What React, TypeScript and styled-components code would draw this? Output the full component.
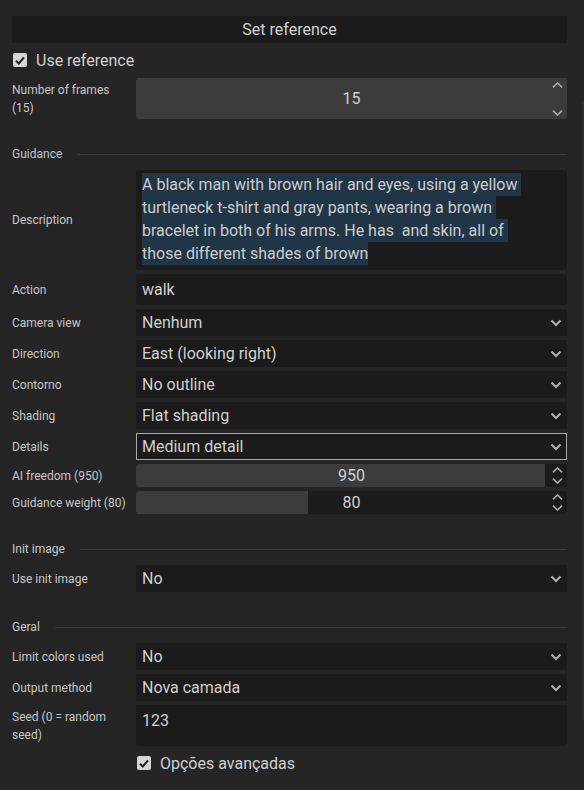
import React from "react";
import styled, { createGlobalStyle } from "styled-components";

const Global = createGlobalStyle`
  html, body { margin: 0; padding: 0; background: #252525; }
  body { font-family: Roboto, "Noto Sans", "Liberation Sans", sans-serif; color: #cfcfcf; }
  * { box-sizing: border-box; }
`;

const Page = styled.div`
  position: relative;
  width: 584px;
  height: 790px;
  overflow: hidden;
  background: #252525;
  padding: 16px 17px 0 12px;
  display: flex;
  flex-direction: column;
`;

const ScrollThumb = styled.div`
  position: absolute;
  right: 0;
  top: 101px;
  width: 2px;
  height: 619px;
  background: #2f2f2f;
`;

const TopButton = styled.div`
  height: 27px;
  background: #1b1b1b;
  display: flex;
  align-items: center;
  justify-content: center;
  font-size: 16px;
  color: #d2d2d2;
`;

const CheckRow = styled.div<{ $indent?: number; $mt: number; $mb: number }>`
  display: flex;
  align-items: center;
  gap: 9px;
  height: 20px;
  margin: ${(p) => p.$mt}px 0 ${(p) => p.$mb}px ${(p) => p.$indent ?? 1}px;
  font-size: 16px;
  color: #d0d0d0;
`;

const Box = styled.span`
  width: 14px;
  height: 14px;
  border-radius: 2px;
  background: #d6d6d6;
  display: flex;
  align-items: center;
  justify-content: center;
`;

const Form = styled.div`
  display: flex;
  flex-direction: column;
  gap: 4px;
`;

const Row = styled.div`
  display: grid;
  grid-template-columns: 124px 1fr;
  align-items: center;
`;

const Label = styled.div`
  font-size: 12px;
  line-height: 18px;
  color: #c6c6c6;
`;

const Section = styled.div`
  display: flex;
  align-items: center;
  gap: 15px;
  height: 16px;
  margin: 23px 0 4px;
  font-size: 12px;
  color: #c6c6c6;
  &::after {
    content: "";
    flex: 1;
    height: 1px;
    background: #3b3b3b;
  }
`;

const Field = styled.div<{ $h: number; $bordered?: boolean; $round?: boolean }>`
  position: relative;
  height: ${(p) => p.$h}px;
  background: #1b1b1b;
  border: 1px solid ${(p) => (p.$bordered ? "#a8a8a8" : "transparent")};
  border-radius: ${(p) => (p.$round ? 3 : 0)}px;
  display: flex;
  align-items: center;
  padding: 0 5px;
  font-size: 16px;
  color: #d0d0d0;
`;

const TopField = styled(Field)`
  align-items: flex-start;
  padding-top: 5px;
`;

const FieldText = styled.span`
  flex: 1;
`;

const Chevron = styled.svg`
  width: 12px;
  height: 8px;
  margin-right: -1px;
`;

const TextArea = styled.div`
  height: 100px;
  background: #1b1b1b;
  border-radius: 3px;
  padding: 3px 6px;
  font-size: 16px;
  color: #cdcdcd;
`;

const Line = styled.div`
  height: 23px;
`;

const Sel = styled.span`
  display: inline-block;
  height: 23px;
  line-height: 24px;
  background: #203546;
  white-space: pre;
`;

const Spin = styled.div<{ $h: number; $pct: number; $bg: string }>`
  position: relative;
  height: ${(p) => p.$h}px;
  border-radius: 3px;
  overflow: hidden;
  background: linear-gradient(
    to right,
    #3c3c3c 0,
    #3c3c3c ${(p) => p.$pct}%,
    ${(p) => p.$bg} ${(p) => p.$pct}%
  );
  display: flex;
  align-items: center;
  justify-content: center;
  font-size: 16px;
  color: #d0d0d0;
`;

const Arrows = styled.div<{ $bg: string; $gap: number }>`
  position: absolute;
  right: 0;
  top: 0;
  bottom: 0;
  width: 22px;
  padding-left: 3px;
  background: ${(p) => p.$bg};
  display: flex;
  flex-direction: column;
  align-items: center;
  justify-content: center;
  gap: ${(p) => p.$gap}px;
`;

const Small = styled.svg`
  width: 11px;
  height: 6px;
  display: block;
`;

const Down = () => (
  <Chevron viewBox="0 0 12 8">
    <path d="M1.5 1.5 L6 6 L10.5 1.5" fill="none" stroke="#b0b0b0" strokeWidth="2" />
  </Chevron>
);

const Up = () => (
  <Small viewBox="0 0 11 6">
    <path d="M1 5.3 L5.5 1 L10 5.3" fill="none" stroke="#a8a8a8" strokeWidth="1.7" />
  </Small>
);
const DownS = () => (
  <Small viewBox="0 0 11 6">
    <path d="M1 0.7 L5.5 5 L10 0.7" fill="none" stroke="#a8a8a8" strokeWidth="1.7" />
  </Small>
);

const Check = () => (
  <Box>
    <svg width="10" height="9" viewBox="0 0 10 9">
      <path d="M1 4.8 L3.8 7.5 L9 1.3" fill="none" stroke="#222" strokeWidth="2" />
    </svg>
  </Box>
);

const SelectRow = ({ label, value, bordered }: { label: string; value: string; bordered?: boolean }) => (
  <Row>
    <Label>{label}</Label>
    <Field $h={27} $bordered={bordered}>
      <FieldText>{value}</FieldText>
      <Down />
    </Field>
  </Row>
);

export default function App() {
  return (
    <>
      <Global />
      <Page>
        <TopButton>Set reference</TopButton>
        <CheckRow $mt={7} $mb={8}>
          <Check />
          Use reference
        </CheckRow>
        <Form>
          <Row>
            <Label>
              Number of frames
              <br />
              (15)
            </Label>
            <Spin $h={41} $pct={100} $bg="#3c3c3c">
              15
              <Arrows $bg="#3c3c3c" $gap={22}>
                <Up />
                <DownS />
              </Arrows>
            </Spin>
          </Row>
          <Section>Guidance</Section>
          <Row>
            <Label>Description</Label>
            <TextArea>
              <Line><Sel>A black man with brown hair and eyes, using a yellow </Sel></Line>
              <Line><Sel>turtleneck t-shirt and gray pants, wearing a brown </Sel></Line>
              <Line><Sel>bracelet in both of his arms. He has  and skin, all of </Sel></Line>
              <Line><Sel>those different shades of brown</Sel></Line>
            </TextArea>
          </Row>
          <Row>
            <Label>Action</Label>
            <Field $h={31} $round>
              <FieldText>walk</FieldText>
            </Field>
          </Row>
          <SelectRow label="Camera view" value="Nenhum" />
          <SelectRow label="Direction" value="East (looking right)" />
          <SelectRow label="Contorno" value="No outline" />
          <SelectRow label="Shading" value="Flat shading" />
          <SelectRow label="Details" value="Medium detail" bordered />
          <Row>
            <Label>AI freedom (950)</Label>
            <Spin $h={23} $pct={94.9} $bg="#1b1b1b">
              950
              <Arrows $bg="#1b1b1b" $gap={5}>
                <Up />
                <DownS />
              </Arrows>
            </Spin>
          </Row>
          <Row>
            <Label>Guidance weight (80)</Label>
            <Spin $h={23} $pct={39.9} $bg="#1b1b1b">
              80
              <Arrows $bg="#1b1b1b" $gap={5}>
                <Up />
                <DownS />
              </Arrows>
            </Spin>
          </Row>
          <Section>Init image</Section>
          <SelectRow label="Use init image" value="No" />
          <Section>Geral</Section>
          <SelectRow label="Limit colors used" value="No" />
          <SelectRow label="Output method" value="Nova camada" />
          <Row>
            <Label>
              Seed (0 = random
              <br />
              seed)
            </Label>
            <TopField $h={41} $round>
              <FieldText>123</FieldText>
            </TopField>
          </Row>
        </Form>
        <CheckRow $indent={125} $mt={7} $mb={0}>
          <Check />
          Opções avançadas
        </CheckRow>
        <ScrollThumb />
      </Page>
    </>
  );
}
